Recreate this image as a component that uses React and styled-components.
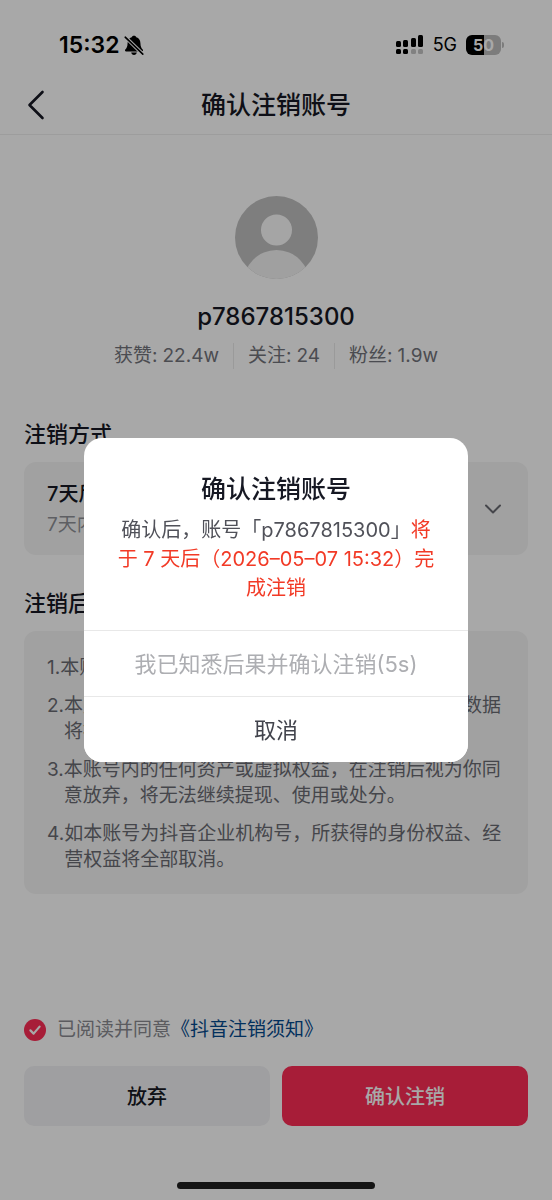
import React, { useState } from "react";
import styled, { createGlobalStyle } from "styled-components";

const GlobalStyle = createGlobalStyle`
  * {
    box-sizing: border-box;
  }
  body {
    margin: 0;
    background-color: #fff;
    font-family: Inter, "Noto Sans CJK SC", sans-serif;
    color: #161823;
  }
  h1, h2, p, ol, dl, dd {
    margin: 0;
    padding: 0;
  }
  button {
    border: 0;
    padding: 0;
    font-family: inherit;
    cursor: pointer;
  }
`;

const Page = styled.div`
  display: flex;
  flex-direction: column;
  min-height: 100vh;
`;

const StatusBar = styled.div`
  display: flex;
  justify-content: space-between;
  align-items: center;
  height: 74px;
  padding: 16px 48px 0 59px;
  color: #000;
`;

const Clock = styled.div`
  display: flex;
  align-items: center;
  gap: 4px;
  font-size: 23px;
  font-weight: 600;
  line-height: 28px;
`;

const StatusIcons = styled.div`
  display: flex;
  align-items: center;
  gap: 9px;
  font-size: 18px;
  line-height: 24px;
`;

const Battery = styled.div`
  display: flex;
  align-items: center;
  gap: 1px;
`;

const BatteryBody = styled.div`
  width: 35px;
  height: 20px;
  border-radius: 6px;
  background: linear-gradient(to right, #000 52%, #bcbcbc 52%);
  color: #fff;
  font-size: 16px;
  font-weight: 700;
  line-height: 20px;
  text-align: center;
`;

const BatteryCap = styled.div`
  width: 2px;
  height: 6px;
  border-radius: 0 2px 2px 0;
  background-color: #bcbcbc;
`;

const NavBar = styled.header`
  display: grid;
  grid-template-columns: 48px 1fr 48px;
  align-items: center;
  height: 61px;
  padding: 1px 12px 0;
  border-bottom: 1px solid #eee;
`;

const NavTitle = styled.h1`
  font-size: 25px;
  font-weight: 500;
  line-height: 32px;
  text-align: center;
`;

const BackButton = styled.button`
  display: flex;
  justify-content: center;
  background: none;
  color: #161823;
`;

const Profile = styled.section`
  display: flex;
  flex-direction: column;
  align-items: center;
  padding-top: 61px;
`;

const UserName = styled.p`
  margin-top: 22px;
  font-size: 24px;
  font-weight: 500;
  line-height: 32px;
`;

const Stats = styled.dl`
  display: flex;
  align-items: center;
  margin-top: 10px;
  font-size: 19px;
  line-height: 26px;
  color: #73747b;
`;

const Stat = styled.div`
  display: flex;
  gap: 5px;
  padding: 0 14px;
  & + & {
    border-left: 1px solid #eaeaea;
  }
`;

const Section = styled.section`
  padding: 0 24px;
  margin-top: ${props => props.$top}px;
`;

const SectionTitle = styled.h2`
  font-size: 22px;
  font-weight: 500;
  line-height: 30px;
`;

const Card = styled.div`
  margin-top: 13px;
  padding: 18px 23px;
  border-radius: 12px;
  background-color: #f5f5f5;
`;

const MethodButton = styled.button`
  display: flex;
  justify-content: space-between;
  align-items: center;
  width: 100%;
  margin-top: 13px;
  padding: 16px 26px 15px 23px;
  border-radius: 12px;
  background-color: #f5f5f5;
  text-align: left;
`;

const MethodName = styled.span`
  display: block;
  font-size: 20px;
  font-weight: 500;
  line-height: 32px;
  color: #161823;
`;

const MethodHint = styled.span`
  display: block;
  font-size: 19px;
  line-height: 30px;
  color: #8f9096;
`;

const NoticeList = styled.ol`
  display: flex;
  flex-direction: column;
  gap: 12px;
  min-height: 227px;
  padding: 6px 0 0;
  list-style: none;
`;

const Notice = styled.li`
  display: flex;
  font-size: 19px;
  line-height: 26px;
  color: #6a6b72;
`;

const NoticeIndex = styled.span`
  flex: none;
`;

const Footer = styled.footer`
  margin-top: auto;
  padding: 0 24px;
`;

const Agreement = styled.div`
  display: flex;
  align-items: center;
  font-size: 19px;
  line-height: 26px;
  color: #8a8b91;
`;

const AgreementLabel = styled.label`
  display: flex;
  align-items: center;
  gap: 11px;
`;

const RoundCheck = styled.input`
  appearance: none;
  width: 22px;
  height: 22px;
  margin: 0;
  border: 1px solid #c8c8cc;
  border-radius: 50%;
  &:checked {
    border: 0;
    background: #fe2c55
      url("data:image/svg+xml,%3Csvg xmlns='http://www.w3.org/2000/svg' viewBox='0 0 22 22' fill='none' stroke='white' stroke-width='2.2' stroke-linecap='round' stroke-linejoin='round'%3E%3Cpath d='M6.4 11.4l3.2 3.2 6-7'/%3E%3C/svg%3E")
      center / 22px no-repeat;
  }
`;

const AgreementLink = styled.a`
  color: #04498d;
  text-decoration: none;
`;

const Actions = styled.div`
  display: grid;
  grid-template-columns: 1fr 1fr;
  gap: 12px;
  margin-top: 23px;
`;

const ActionButton = styled.button`
  height: 60px;
  padding-bottom: 2px;
  border-radius: 10px;
  background-color: ${props => (props.$primary ? "#fe2c55" : "#f2f2f4")};
  color: ${props => (props.$primary ? "#fff" : "#161823")};
  font-size: 20px;
  font-weight: 500;
`;

const HomeIndicator = styled.div`
  position: relative;
  z-index: 2;
  width: 198px;
  height: 7px;
  margin: 56px auto 11px;
  border-radius: 4px;
  background-color: #141414;
`;

const Mask = styled.div`
  position: fixed;
  inset: 0;
  z-index: 1;
  display: flex;
  justify-content: center;
  align-items: center;
  padding: 0 84px;
  background-color: rgba(0, 0, 0, 0.34);
`;

const Dialog = styled.div`
  width: 100%;
  max-width: 420px;
  overflow: hidden;
  border-radius: 18px;
  background-color: #fff;
`;

const DialogBody = styled.div`
  padding: 35px 28px 27px;
  text-align: center;
`;

const DialogTitle = styled.h2`
  font-size: 25px;
  font-weight: 500;
  line-height: 32px;
`;

const DialogText = styled.p`
  margin-top: 11px;
  font-size: 20px;
  line-height: 29px;
  color: #505159;
`;

const Warning = styled.span`
  color: #f23a26;
`;

const DialogButton = styled.button`
  display: block;
  width: 100%;
  height: 66px;
  padding-bottom: 4px;
  border-top: 1px solid #e8e8e8;
  background-color: #fff;
  font-size: 22px;
  color: #41434c;
  &:disabled {
    color: #adaeb2;
    cursor: default;
  }
`;

const stats = [
  { label: "获赞", value: "22.4w" },
  { label: "关注", value: "24" },
  { label: "粉丝", value: "1.9w" }
];

const notices = [
  "本账号将无法登录和使用。",
  "本账号内的个人资料、作品、评论、私信等所有数据将被清空且无法找回。",
  "本账号内的任何资产或虚拟权益，在注销后视为你同意放弃，将无法继续提现、使用或处分。",
  "如本账号为抖音企业机构号，所获得的身份权益、经营权益将全部取消。"
];

const MutedBell = () => (
  <svg width="20" height="21" viewBox="0 0 20 21" aria-hidden="true">
    <path
      d="M10 .8c1.300 0 2.100.7 2.300 1.500 2.700.8 4 3 4.100 5.800.1 3.700.9 5.100 2.300 6.500.6.7.3 1.900-.8 1.900H2.100c-1.100 0-1.400-1.200-.8-1.900C2.700 13.200 3.500 11.800 3.600 8.100 3.700 5.300 5 3.100 7.700 2.300 7.900 1.500 8.700.8 10 .8z"
      fill="#000"
    />
    <path d="M7.200 17.600h5.600c-.3 1.500-1.300 2.400-2.800 2.400s-2.500-.9-2.800-2.400z" fill="#000" />
    <path d="M1 1.800L19 19.400" stroke="#fff" strokeWidth="3.600" />
    <path d="M1.200 2.200L18.800 19.200" stroke="#000" strokeWidth="1.600" strokeLinecap="round" />
  </svg>
);

const DualSignal = () => (
  <svg width="28" height="20" viewBox="0 0 28 20" aria-hidden="true">
    <g fill="#000">
      <rect x="0" y="6" width="5" height="6" rx="1.500" />
      <rect x="7" y="5" width="5" height="7" rx="1.500" />
      <rect x="15" y="3" width="5" height="9" rx="1.500" />
      <rect x="22" y="0" width="5" height="12" rx="1.500" />
      <rect x="0" y="14" width="5" height="5" rx="1.500" />
      <rect x="7" y="14" width="5" height="5" rx="1.500" />
    </g>
    <g fill="#c4c4c4">
      <rect x="15" y="14" width="5" height="5" rx="1.500" />
      <rect x="22" y="14" width="5" height="5" rx="1.500" />
    </g>
  </svg>
);

const BackIcon = () => (
  <svg width="18" height="30" viewBox="0 0 18 30" fill="none" aria-hidden="true">
    <path
      d="M15.500 2L2.500 15l13 13"
      stroke="currentColor"
      strokeWidth="2.600"
      strokeLinecap="round"
      strokeLinejoin="round"
    />
  </svg>
);

const ChevronDown = () => (
  <svg width="18" height="12" viewBox="0 0 18 12" fill="none" aria-hidden="true">
    <path
      d="M2 2.500l7 7 7-7"
      stroke="#6a6b72"
      strokeWidth="2"
      strokeLinecap="round"
      strokeLinejoin="round"
    />
  </svg>
);

const Avatar = () => (
  <svg width="83" height="83" viewBox="0 0 83 83" role="img" aria-label="头像">
    <clipPath id="avatarClip">
      <circle cx="41.500" cy="41.500" r="41.500" />
    </clipPath>
    <g clipPath="url(#avatarClip)">
      <rect width="83" height="83" fill="#c0c0c0" />
      <circle cx="41.500" cy="34" r="15.500" fill="#fbfbfb" />
      <circle cx="41.500" cy="87" r="33" fill="#f3f3f3" />
    </g>
  </svg>
);

const App = () => {
  const [agreed, setAgreed] = useState(true);
  const [dialogOpen, setDialogOpen] = useState(true);

  return (
    <>
      <GlobalStyle />
      <Page>
        <StatusBar>
          <Clock>
            15:32
            <MutedBell />
          </Clock>
          <StatusIcons>
            <DualSignal />
            <span>5G</span>
            <Battery>
              <BatteryBody>50</BatteryBody>
              <BatteryCap />
            </Battery>
          </StatusIcons>
        </StatusBar>
        <NavBar>
          <BackButton type="button" aria-label="返回">
            <BackIcon />
          </BackButton>
          <NavTitle>确认注销账号</NavTitle>
        </NavBar>

        <Profile>
          <Avatar />
          <UserName>p7867815300</UserName>
          <Stats>
            {stats.map(stat => (
              <Stat key={stat.label}>
                <dt>{stat.label}:</dt>
                <dd>{stat.value}</dd>
              </Stat>
            ))}
          </Stats>
        </Profile>

        <Section $top={50}>
          <SectionTitle>注销方式</SectionTitle>
          <MethodButton type="button">
            <span>
              <MethodName>7天后注销</MethodName>
              <MethodHint>7天内可撤销</MethodHint>
            </span>
            <ChevronDown />
          </MethodButton>
        </Section>

        <Section $top={33}>
          <SectionTitle>注销后果</SectionTitle>
          <Card>
            <NoticeList>
              {notices.map((notice, index) => (
                <Notice key={notice}>
                  <NoticeIndex>{index + 1}.</NoticeIndex>
                  <span>{notice}</span>
                </Notice>
              ))}
            </NoticeList>
          </Card>
        </Section>

        <Footer>
          <Agreement>
            <AgreementLabel>
              <RoundCheck
                type="checkbox"
                checked={agreed}
                onChange={e => setAgreed(e.target.checked)}
              />
              已阅读并同意
            </AgreementLabel>
            <AgreementLink href="#notice">《抖音注销须知》</AgreementLink>
          </Agreement>
          <Actions>
            <ActionButton type="button">放弃</ActionButton>
            <ActionButton type="button" $primary onClick={() => setDialogOpen(true)}>
              确认注销
            </ActionButton>
          </Actions>
        </Footer>
        <HomeIndicator />
      </Page>

      {dialogOpen && (
        <Mask>
          <Dialog role="dialog" aria-modal="true" aria-labelledby="dialogTitle">
            <DialogBody>
              <DialogTitle id="dialogTitle">确认注销账号</DialogTitle>
              <DialogText>
                确认后，账号「p7867815300」
                <Warning>将于 7 天后（2026–05–07 15:32）完成注销</Warning>
              </DialogText>
            </DialogBody>
            <DialogButton type="button" disabled>
              我已知悉后果并确认注销(5s)
            </DialogButton>
            <DialogButton type="button" onClick={() => setDialogOpen(false)}>
              取消
            </DialogButton>
          </Dialog>
        </Mask>
      )}
    </>
  );
};

export default App;
